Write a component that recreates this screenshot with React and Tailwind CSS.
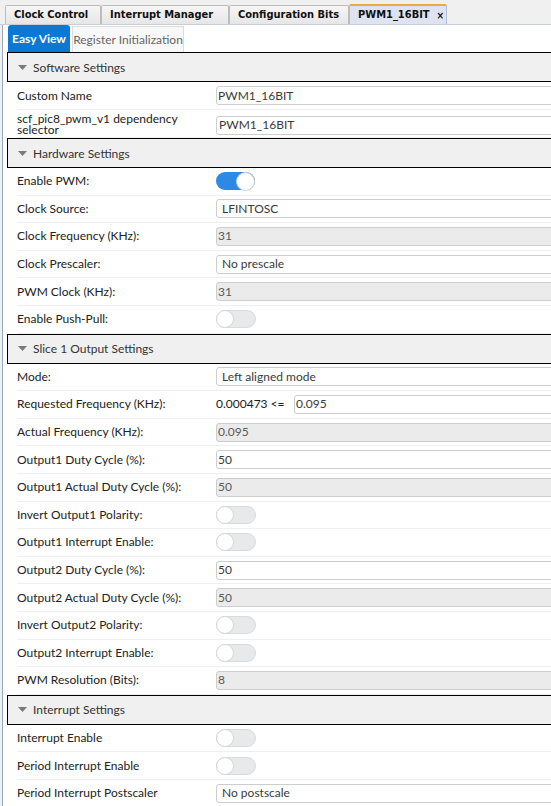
const sections = [
    {
        title: 'Software Settings',
        rows: [
            { label: 'Custom Name', kind: 'text', value: 'PWM1_16BIT' },
            { label: 'scf_pic8_pwm_v1 dependency selector', kind: 'combo2', value: 'PWM1_16BIT', twoLine: true },
        ],
    },
    {
        title: 'Hardware Settings',
        rows: [
            { label: 'Enable PWM:', kind: 'toggle', on: true },
            { label: 'Clock Source:', kind: 'combo', value: 'LFINTOSC' },
            { label: 'Clock Frequency (KHz):', kind: 'disabled', value: '31' },
            { label: 'Clock Prescaler:', kind: 'combo', value: 'No prescale' },
            { label: 'PWM Clock (KHz):', kind: 'disabled', value: '31' },
            { label: 'Enable Push-Pull:', kind: 'toggle', on: false },
        ],
    },
    {
        title: 'Slice 1 Output Settings',
        rows: [
            { label: 'Mode:', kind: 'combo', value: 'Left aligned mode' },
            { label: 'Requested Frequency (KHz):', kind: 'range', min: '0.000473 <=', value: '0.095' },
            { label: 'Actual Frequency (KHz):', kind: 'disabled', value: '0.095' },
            { label: 'Output1 Duty Cycle (%):', kind: 'text', value: '50' },
            { label: 'Output1 Actual Duty Cycle (%):', kind: 'disabled', value: '50' },
            { label: 'Invert Output1 Polarity:', kind: 'toggle', on: false },
            { label: 'Output1 Interrupt Enable:', kind: 'toggle', on: false },
            { label: 'Output2 Duty Cycle (%):', kind: 'text', value: '50' },
            { label: 'Output2 Actual Duty Cycle (%):', kind: 'disabled', value: '50' },
            { label: 'Invert Output2 Polarity:', kind: 'toggle', on: false },
            { label: 'Output2 Interrupt Enable:', kind: 'toggle', on: false },
            { label: 'PWM Resolution (Bits):', kind: 'disabled', value: '8' },
        ],
    },
    {
        title: 'Interrupt Settings',
        rows: [
            { label: 'Interrupt Enable', kind: 'toggle', on: false },
            { label: 'Period Interrupt Enable', kind: 'toggle', on: false },
            { label: 'Period Interrupt Postscaler', kind: 'combo', value: 'No postscale' },
        ],
    },
];

const topTabs = ['Clock Control', 'Interrupt Manager', 'Configuration Bits'];

function Toggle({ on }) {
    if (on) {
        return (
            <div className="flex h-[18px] w-[39px] items-center justify-end rounded-full bg-[#2a8ae6]">
                <div className="h-[19px] w-[19px] rounded-full border border-[#cfcfcf] bg-white" />
            </div>
        );
    }
    return (
        <div className="flex h-[18px] w-[40px] items-center rounded-full border border-[#dadada] bg-[#e8e9eb]">
            <div className="h-[18px] w-[18px] -ml-px rounded-full border border-[#d6d6d6] bg-white" />
        </div>
    );
}

function Field({ value, kind }) {
    const base = 'flex h-[19px] w-[400px] shrink-0 items-center rounded-[3px] border border-[#cdcdcd] text-[12px]';
    if (kind === 'disabled') {
        return <div className={`${base} bg-[#ebebeb] pl-px text-[#5a5a5a]`}>{value}</div>;
    }
    if (kind === 'combo') {
        return <div className={`${base} bg-white pl-[5px] text-[#3a3a3a]`}>{value}</div>;
    }
    if (kind === 'combo2') {
        return <div className={`${base} bg-white pl-[2px] text-[#3a3a3a]`}>{value}</div>;
    }
    return <div className={`${base} bg-white pl-px text-[#3a3a3a]`}>{value}</div>;
}

function Row({ row, tall }) {
    let control;
    if (row.kind === 'toggle') {
        control = <Toggle on={row.on} />;
    } else if (row.kind === 'range') {
        control = (
            <div className="flex items-center">
                <span className="w-[78px] shrink-0 text-[12px] text-[#1a1a1a]">{row.min}</span>
                <Field value={row.value} kind="text" />
            </div>
        );
    } else {
        control = <Field value={row.value} kind={row.kind} />;
    }

    return (
        <div className={`ml-[10px] flex items-center border-b border-[#efefef] ${tall ? 'h-[28px]' : 'h-[27.6px]'}`}>
            <div className={`w-[199px] shrink-0 text-[12px] text-[#222] ${row.twoLine ? 'leading-[11px]' : ''}`}>
                {row.twoLine ? (
                    <>
                        scf_pic8_pwm_v1 dependency
                        <br />
                        selector
                    </>
                ) : (
                    row.label
                )}
            </div>
            <div className={row.twoLine ? 'pt-[3px]' : ''}>{control}</div>
        </div>
    );
}

function SectionHeader({ title }) {
    return (
        <div className="flex h-[30px] items-center border-y border-l border-black bg-[#f0f0f0] pl-[10px]">
            <svg width="9" height="5" viewBox="0 0 9 5" className="mr-[6px]">
                <path d="M0 0 H9 L4.5 5 Z" fill="#7b7b7b" />
            </svg>
            <span className="pt-px text-[12px] text-[#333]">{title}</span>
        </div>
    );
}

export default function App() {
    return (
        <div className="h-[806px] w-[551px] overflow-hidden bg-[#f0f0f0] font-['Lato','Segoe_UI',sans-serif]">
            <div className="flex h-[25px] items-end border-b border-[#c9ced6] pl-[5px] font-['DejaVu_Sans_Condensed','DejaVu_Sans',sans-serif] text-[11px] font-bold text-[#111]">
                {topTabs.map((t, i) => (
                    <div
                        key={t}
                        className={`flex h-[19px] items-center rounded-t-[2px] border border-b-0 border-[#bcbcbc] bg-gradient-to-b from-[#f6f6f6] to-[#e6e6e6] px-[8px] ${i === 0 ? 'w-[96px]' : i === 1 ? 'w-[128px]' : 'w-[120px]'}`}
                    >
                        {t}
                    </div>
                ))}
                <div className="flex h-[20px] w-[98px] items-center gap-[7px] rounded-t-[2px] border border-b-0 border-t-2 border-[#b5bccb] border-t-[#f2a93b] bg-[#dde3f1] pl-[8px]">
                    PWM1_16BIT
                    <span className="text-[10px]">×</span>
                </div>
            </div>
            <div className="flex h-[781px]">
                <div className="w-[2px] shrink-0" />
                <div className="w-px shrink-0 bg-[#98a8bc]" />
                <div className="flex-1 overflow-hidden bg-white pl-[4px]">
                    <div className="ml-[1px] flex h-[27px] items-end">
                        <div className="flex h-[27px] w-[62px] items-center justify-center rounded-t-[3px] bg-[#0b79d3] text-[12px] font-bold text-white">
                            Easy View
                        </div>
                        <div className="ml-[2px] flex h-[26px] w-[112px] items-center justify-center border border-b-0 border-[#dcdcdc] bg-[#f8f8f8] text-[12px] text-[#666]">
                            Register Initialization
                        </div>
                    </div>
                    {sections.map((s, si) => (
                        <div key={s.title}>
                            <SectionHeader title={s.title} />
                            {s.rows.map((r) => (
                                <Row key={r.label} row={r} tall={si === 0} />
                            ))}
                        </div>
                    ))}
                </div>
            </div>
        </div>
    );
}
